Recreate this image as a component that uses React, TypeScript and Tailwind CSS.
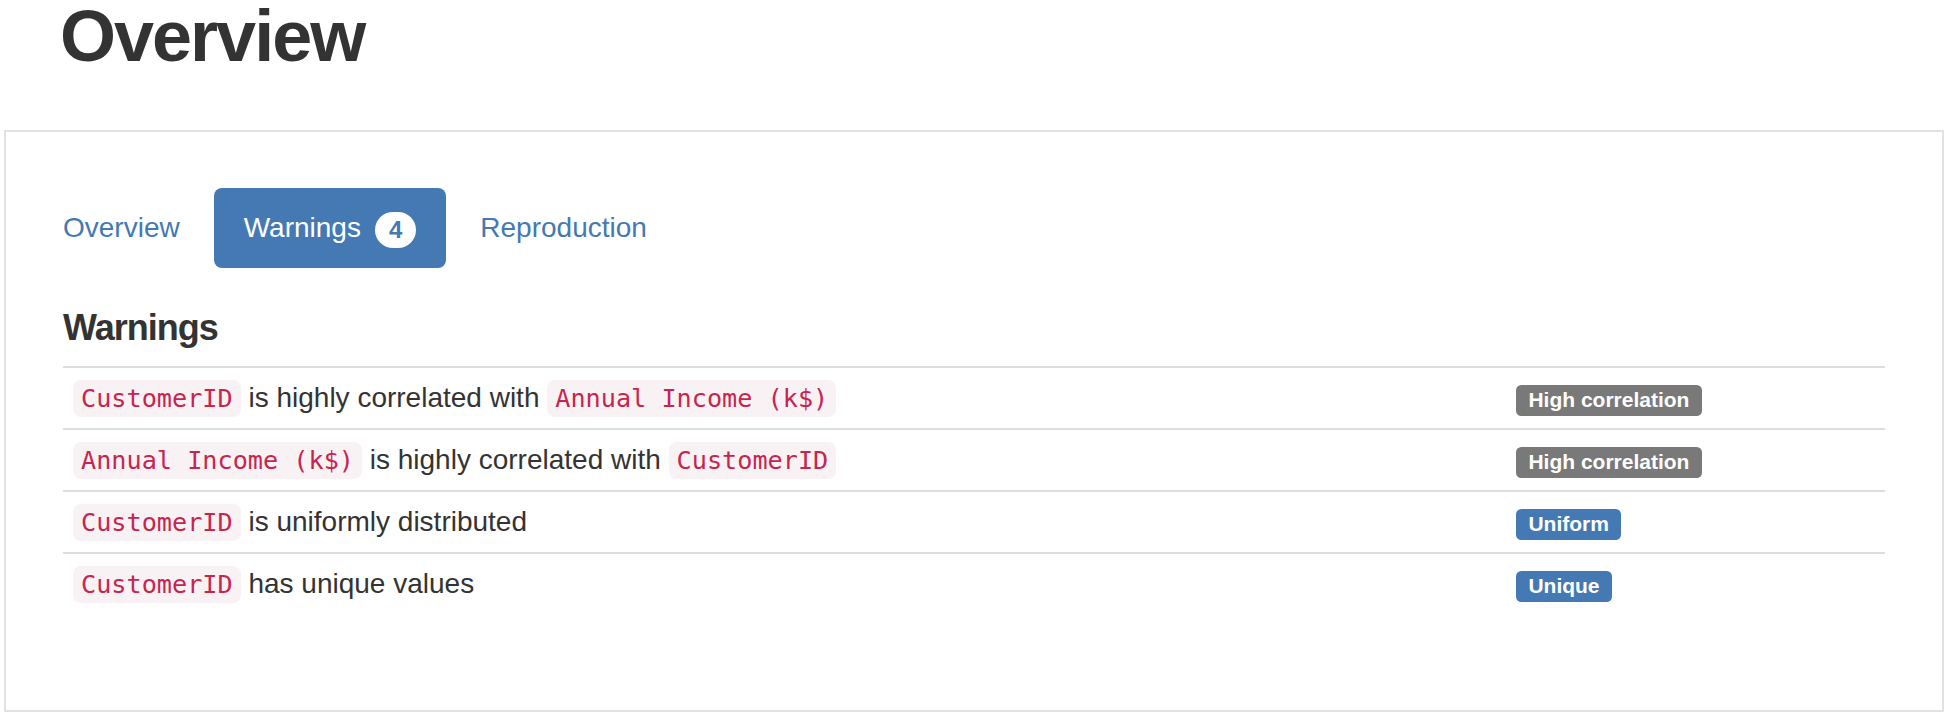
import React from 'react';

type Warning = {
  parts: { code?: string; text?: string }[];
  label: string;
  kind: 'default' | 'primary';
};

const warnings: Warning[] = [
  {
    parts: [{ code: 'CustomerID' }, { text: 'is highly correlated with' }, { code: 'Annual Income (k$)' }],
    label: 'High correlation',
    kind: 'default',
  },
  {
    parts: [{ code: 'Annual Income (k$)' }, { text: 'is highly correlated with' }, { code: 'CustomerID' }],
    label: 'High correlation',
    kind: 'default',
  },
  {
    parts: [{ code: 'CustomerID' }, { text: 'is uniformly distributed' }],
    label: 'Uniform',
    kind: 'primary',
  },
  {
    parts: [{ code: 'CustomerID' }, { text: 'has unique values' }],
    label: 'Unique',
    kind: 'primary',
  },
];

function Code({ children }: { children: React.ReactNode }) {
  return (
    <code className="font-['DejaVu_Sans_Mono',monospace] text-[25.2px] leading-[25px] text-[#c7254e] bg-[#f9f2f4] px-[8px] py-[4px] rounded-[8px]">
      {children}
    </code>
  );
}

function Label({ kind, children }: { kind: 'default' | 'primary'; children: React.ReactNode }) {
  const bg = kind === 'default' ? 'bg-[#797979]' : 'bg-[#4479b3]';
  return (
    <span className={`${bg} inline-block text-white font-bold text-[21px] leading-none pt-[4.2px] pb-[6.3px] px-[12.4px] rounded-[5.25px]`}>
      {children}
    </span>
  );
}

export default function App() {
  return (
    <div className="bg-white w-[1948px] h-[716px] overflow-hidden font-['Liberation_Sans',Arial,sans-serif] text-[#333]">
      <h1 className="pl-[60px] text-[72px] leading-[73px] font-bold tracking-[-2px]">Overview</h1>

      <div className="ml-[4px] mt-[57px] w-[1940px] h-[582px] border-2 border-[#e2e2e6] px-[57px] pt-[56px]">
        {/* tabs */}
        <div className="-ml-[30px] flex gap-[4px] text-[28px] leading-[40px]">
          <a className="px-[30px] py-[20px] rounded-[8px] text-[#4479b3]">Overview</a>
          <a className="flex items-center px-[30px] py-[20px] rounded-[8px] bg-[#4479b3] text-white">
            <span>Warnings</span>
            <span className="ml-[14px] mt-[4px] min-w-[20px] h-[36px] px-[14px] rounded-[20px] bg-white text-[#4479b3] text-[24px] leading-[36px] font-bold">
              4
            </span>
          </a>
          <a className="px-[30px] py-[20px] rounded-[8px] text-[#4479b3]">Reproduction</a>
        </div>

        <h4 className="mt-[40px] mb-[18px] text-[36px] leading-[40px] font-bold tracking-[-1px]">Warnings</h4>

        <div className="text-[28px] leading-[40px]">
          {warnings.map((w, i) => (
            <div key={i} className="grid grid-cols-[1443px_1fr] border-t-2 border-[#dddddd]">
              <div className="p-[10px] h-[60px]">
                {w.parts.map((p, j) => (
                  <React.Fragment key={j}>
                    {j > 0 && ' '}
                    {p.code ? <Code>{p.code}</Code> : p.text}
                  </React.Fragment>
                ))}
              </div>
              <div className="p-[10px] h-[60px]">
                <Label kind={w.kind}>{w.label}</Label>
              </div>
            </div>
          ))}
        </div>
      </div>
    </div>
  );
}
